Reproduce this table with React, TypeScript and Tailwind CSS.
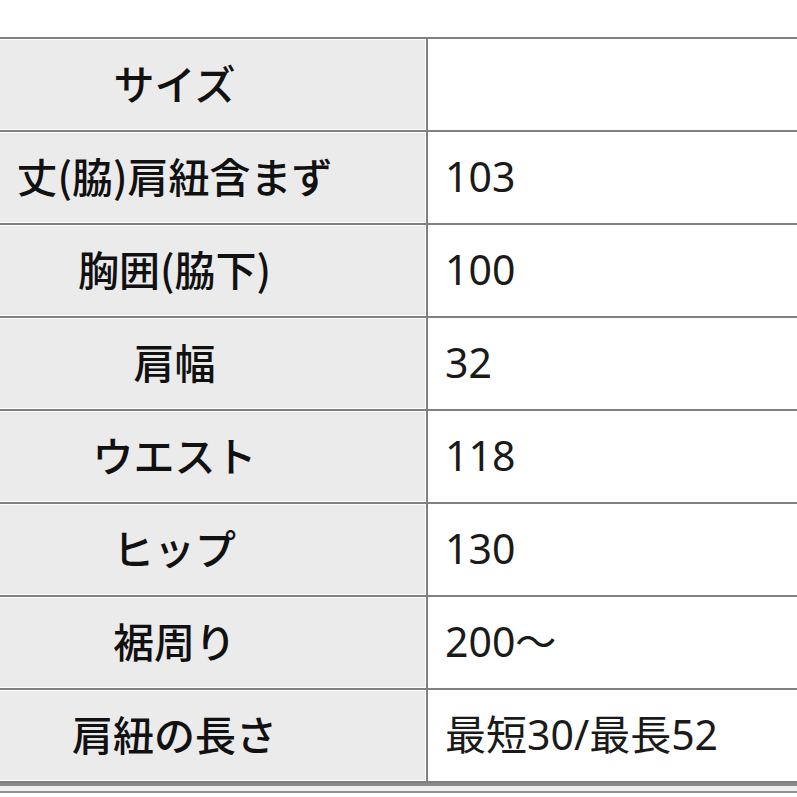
import React from "react";

const rows: [string, string][] = [
  ["サイズ", ""],
  ["丈(脇)肩紐含まず", "103"],
  ["胸囲(脇下)", "100"],
  ["肩幅", "32"],
  ["ウエスト", "118"],
  ["ヒップ", "130"],
  ["裾周り", "200〜"],
  ["肩紐の長さ", "最短30/最長52"],
];

export default function App() {
  return (
    <div className="w-[797px] h-[797px] overflow-hidden bg-white" style={{ fontFamily: '"Noto Sans", "Noto Sans CJK JP", sans-serif' }}>
      <div className="h-[37px]" />
      {rows.map(([k, v], i) => (
        <div key={i} className="flex h-[93px] border-t-2 border-[#808080]">
          <div className="w-[426px] bg-[#ebebeb] border-y border-white border-r flex items-center justify-center pr-[76px] pb-[5px]">
            <span className="text-[41px] font-medium text-[#111] leading-none whitespace-nowrap" style={{ fontFamily: '"Noto Sans CJK JP", sans-serif' }}>{k}</span>
          </div>
          <div className="flex-1 border-l-2 border-[#808080] flex items-center pl-[17px] pb-[3px]">
            <span className="text-[41px] text-[#1a1a1a] leading-none whitespace-nowrap" style={{ fontFamily: '"Noto Sans", "Noto Sans CJK JP", sans-serif' }}>{v}</span>
          </div>
        </div>
      ))}
      <div className="border-t-2 border-[#808080] h-[1px] bg-white" />
      <div className="h-[3px] bg-[#8a8a8a]" />
      <div className="h-[5px] bg-[#f0f0f0]" />
      <div className="h-[2px] bg-[#909090]" />
    </div>
  );
}
